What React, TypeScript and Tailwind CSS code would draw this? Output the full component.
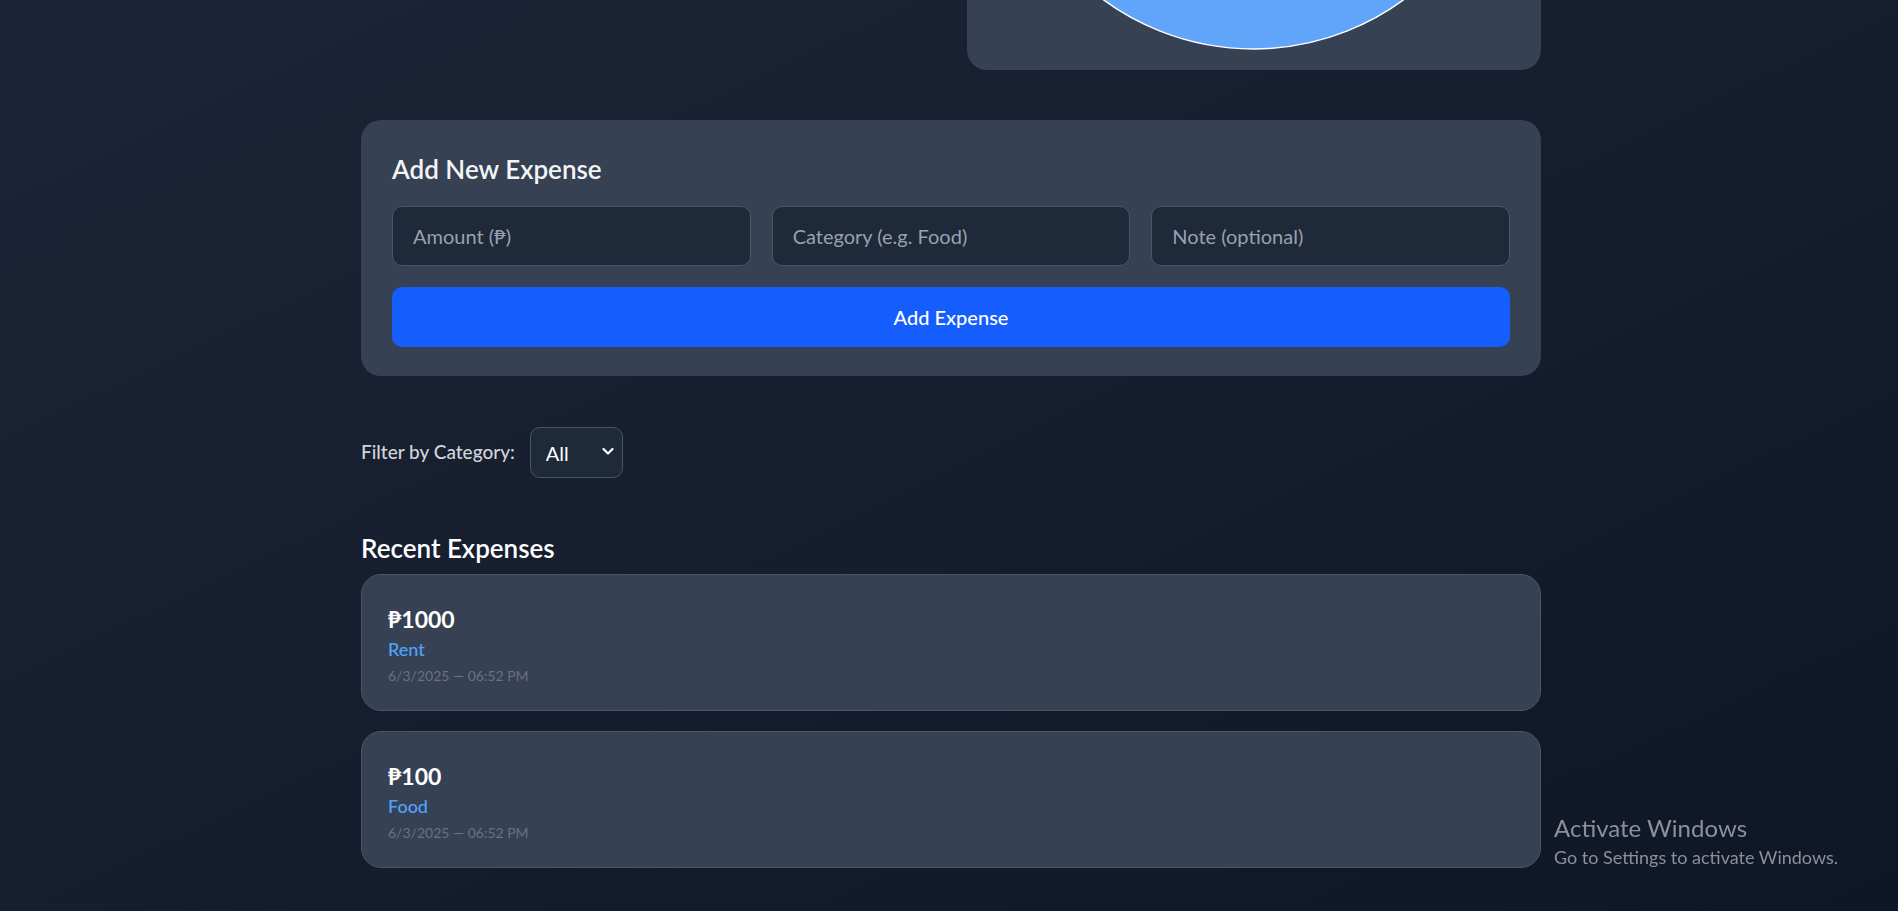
import React, { useState } from 'react';

type Expense = {
  amount: number;
  category: string;
  date: string;
};

const expenses: Expense[] = [
  { amount: 1000, category: 'Rent', date: '6/3/2025 — 06:52 PM' },
  { amount: 100, category: 'Food', date: '6/3/2025 — 06:52 PM' },
];

function ChartCard() {
  return (
    <div className="h-[70px] overflow-hidden rounded-b-[20px] bg-[#364153]">
      <svg width="100%" height="70" viewBox="0 0 575 70" preserveAspectRatio="xMidYMin meet">
        <circle cx="287" cy="-205" r="254" fill="#60a5fa" stroke="#ffffff" strokeWidth="1.5" />
      </svg>
    </div>
  );
}

function AddExpenseForm() {
  return (
    <section className="rounded-[20px] bg-[#364153] px-[31px] pt-[31px] pb-[29px]">
      <h2 className="mb-[19px] text-[26px] font-semibold leading-[36px] text-gray-100">Add New Expense</h2>
      <div className="grid grid-cols-3 gap-[21px]">
        <input
          placeholder="Amount (₱)"
          className="h-[60px] rounded-[10px] border border-gray-600 bg-[#1e2939] px-[20px] text-[20px] text-white placeholder:text-gray-400 outline-none"
        />
        <input
          placeholder="Category (e.g. Food)"
          className="h-[60px] rounded-[10px] border border-gray-600 bg-[#1e2939] px-[20px] text-[20px] text-white placeholder:text-gray-400 outline-none"
        />
        <input
          placeholder="Note (optional)"
          className="h-[60px] rounded-[10px] border border-gray-600 bg-[#1e2939] px-[20px] text-[20px] text-white placeholder:text-gray-400 outline-none"
        />
      </div>
      <button className="mt-[21px] h-[60px] w-full rounded-[10px] bg-[#155dfc] text-[20px] font-medium text-white">
        Add Expense
      </button>
    </section>
  );
}

function CategoryFilter() {
  const [value, setValue] = useState('All');
  return (
    <div className="flex items-center">
      <label className="mr-[15px] text-[19px] font-medium text-gray-300">Filter by Category:</label>
      <div className="relative">
        <select
          value={value}
          onChange={(e) => setValue(e.target.value)}
          className="h-[51px] w-[93px] appearance-none rounded-[10px] border border-gray-600 bg-[#1e2939] pl-[15px] text-[20px] text-white outline-none"
        >
          <option>All</option>
          <option>Rent</option>
          <option>Food</option>
        </select>
        <svg
          className="pointer-events-none absolute right-[9px] top-[20px]"
          width="12"
          height="9"
          viewBox="0 0 12 9"
          fill="none"
        >
          <path d="M1.5 2 L6 6.5 L10.5 2" stroke="#ffffff" strokeWidth="2.2" strokeLinecap="round" strokeLinejoin="round" />
        </svg>
      </div>
    </div>
  );
}

function ExpenseItem({ expense }: { expense: Expense }) {
  return (
    <li className="rounded-[20px] border border-gray-600 bg-[#364153] px-[26px] pt-[26px] pb-[24px]">
      <p className="text-[23px] font-bold leading-[36px] text-white">₱{expense.amount}</p>
      <p className="text-[18px] font-medium leading-[24px] text-blue-400">{expense.category}</p>
      <p className="mt-[4px] text-[14px] leading-[21px] text-gray-500">{expense.date}</p>
    </li>
  );
}

export default function App() {
  return (
    <div className="relative min-h-screen bg-gradient-to-br from-[#1c2537] to-[#0f1626] font-['Lato',sans-serif]">
      <div className="mx-auto w-[1184px] pl-[4px] pb-[40px]">
        <div className="grid grid-cols-2 gap-8">
          <div />
          <ChartCard />
        </div>

        <div className="mt-[50px]">
          <AddExpenseForm />
        </div>

        <div className="mt-[51px]">
          <CategoryFilter />
        </div>

        <h2 className="mt-[52px] mb-[8px] text-[26px] font-semibold leading-[36px] text-white">Recent Expenses</h2>
        <ul className="space-y-[20px]">
          {expenses.map((e, i) => (
            <ExpenseItem key={i} expense={e} />
          ))}
        </ul>
      </div>

      <div className="pointer-events-none fixed left-[1554px] top-[812px] text-[#8b909a]">
        <p className="text-[24px] leading-[32px]">Activate Windows</p>
        <p className="text-[18px] leading-[26px]">Go to Settings to activate Windows.</p>
      </div>
    </div>
  );
}
